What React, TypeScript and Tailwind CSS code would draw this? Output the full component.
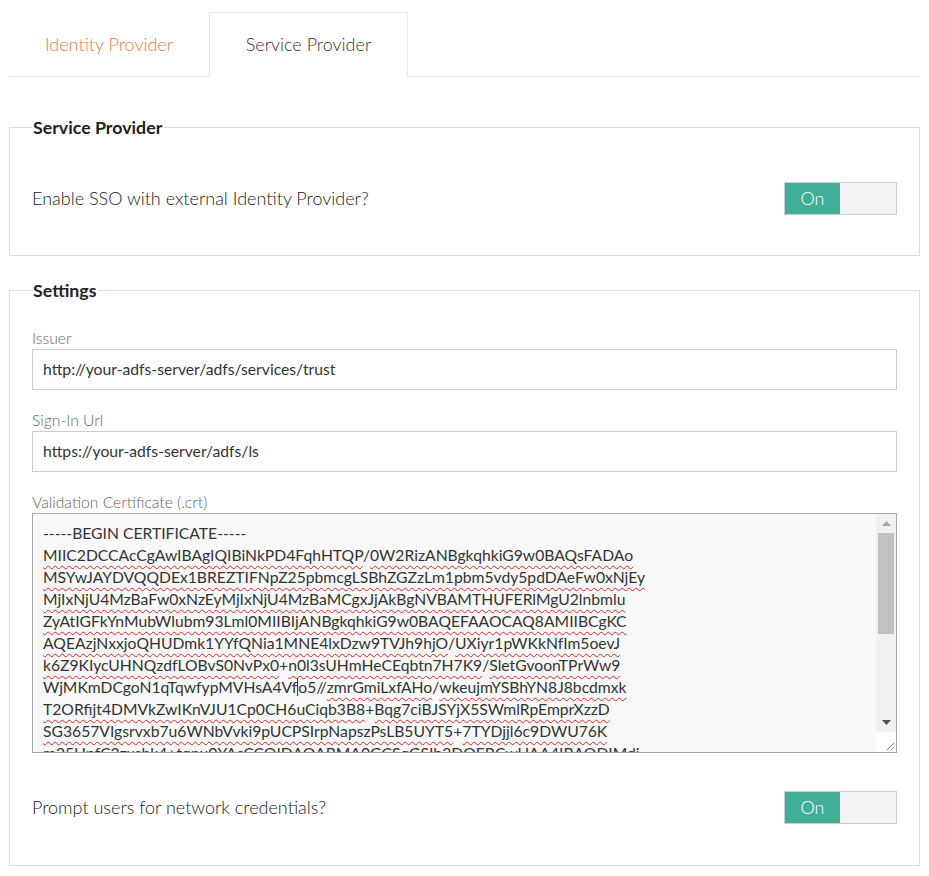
import React from 'react';

const certLines = [
    '-----BEGIN CERTIFICATE-----',
    'MIIC2DCCAcCgAwIBAgIQIBiNkPD4FqhHTQP/0W2RizANBgkqhkiG9w0BAQsFADAo',
    'MSYwJAYDVQQDEx1BREZTIFNpZ25pbmcgLSBhZGZzLm1pbm5vdy5pdDAeFw0xNjEy',
    'MjIxNjU4MzBaFw0xNzEyMjIxNjU4MzBaMCgxJjAkBgNVBAMTHUFERlMgU2lnbmlu',
    'ZyAtIGFkYnMubWlubm93Lml0MIIBIjANBgkqhkiG9w0BAQEFAAOCAQ8AMIIBCgKC',
    'AQEAzjNxxjoQHUDmk1YYfQNia1MNE4lxDzw9TVJh9hjO/UXiyr1pWKkNfIm5oevJ',
    'k6Z9KIycUHNQzdfLOBvS0NvPx0+n0l3sUHmHeCEqbtn7H7K9/SletGvoonTPrWw9',
    'WjMKmDCgoN1qTqwfypMVHsA4Vfo5//zmrGmiLxfAHo/wkeujmYSBhYN8J8bcdmxk',
    'T2ORfijt4DMVkZwIKnVJU1Cp0CH6uCiqb3B8+Bqg7ciBJSYjX5SWmlRpEmprXzzD',
    'SG3657VIgsrvxb7u6WNbVvki9pUCPSIrpNapszPsLB5UYT5+7TYDjjl6c9DWU76K',
    'm25HpfC2zxsbk4+tqnu0YAsCCQIDAQABMA0GCSqGSIb3DQEBCwUAA4IBAQDIMdi',
];

// words the spell checker flags: split on / and +, skip the header and the word being edited
function CertLine({ text, index }: { text: string; index: number }) {
    if (index === 0) return <div>{text}</div>;
    const parts = text.split(/([/+]+)/);
    return (
        <div className="whitespace-nowrap">
            {parts.map((p, i) => {
                if (p === '') return null;
                if (/^[/+]+$/.test(p)) return <span key={i}>{p}</span>;
                if (index === 7 && i === 0) {
                    return (
                        <span key={i}>
                            WjMKmDCgoN1qTqwfypMVHsA4Vf
                            <span className="inline-block w-px h-[18px] bg-[#333] align-[-3px]" />
                            o5
                        </span>
                    );
                }
                return (
                    <span key={i} className="underline decoration-wavy decoration-[#e02020] decoration-1 underline-offset-[4px]">
                        {p}
                    </span>
                );
            })}
        </div>
    );
}

function Toggle() {
    return (
        <div className="flex w-[113px] h-[33px] border border-[#cccccc] shrink-0">
            <div className="w-[55px] bg-[#42ae98] text-white text-[18px] font-light flex items-center justify-center">On</div>
            <div className="flex-1 bg-[#f3f3f3]" />
        </div>
    );
}

function Field({ label, value }: { label: string; value: string }) {
    return (
        <div className="mb-[20px]">
            <div className="text-[15.7px] leading-[20px] font-light text-[#666] mb-px">{label}</div>
            <div className="h-[41px] border border-[#cccccc] bg-white flex items-center px-[10px] text-[15.7px] text-[#333]">
                {value}
            </div>
        </div>
    );
}

export default function App() {
    return (
        <div className="min-h-[876px] bg-white px-[9px] pt-[12px] text-[#444]" style={{ fontFamily: 'Lato, "Open Sans", sans-serif' }}>
            {/* tabs */}
            <div className="flex border-b border-[#e8e8e8] h-[65px]">
                <div className="w-[200px] flex items-center justify-center text-[18px] font-light text-[#f07a48] pt-px">
                    Identity Provider
                </div>
                <div className="w-[199px] flex items-center justify-center text-[18px] font-light text-[#333] border border-[#e8e8e8] border-b-0 bg-white -mb-px pb-[1px]">
                    Service Provider
                </div>
            </div>

            <fieldset className="mt-[40px] border border-[#dddddd] px-[22px] pt-[45px] pb-[40px]">
                <legend className="px-px text-[17.8px] leading-[20px] font-bold text-[#222]">Service Provider</legend>
                <div className="flex items-center justify-between">
                    <span className="text-[18px] font-light text-[#222]">Enable SSO with external Identity Provider?</span>
                    <Toggle />
                </div>
            </fieldset>

            <fieldset className="mt-[24px] border border-[#dddddd] px-[22px] pt-[28px] pb-[41px]">
                <legend className="px-px text-[17.8px] leading-[20px] font-bold text-[#222]">Settings</legend>
                <Field label="Issuer" value="http://your-adfs-server/adfs/services/trust" />
                <Field label="Sign-In Url" value="https://your-adfs-server/adfs/ls" />

                <div>
                    <div className="text-[15.7px] leading-[20px] font-light text-[#666] mb-px">Validation Certificate (.crt)</div>
                    <div className="h-[240px] border border-[#a9a9a9] bg-[#f9f9f9] flex">
                        <div className="flex-1 overflow-hidden pl-[10px] pt-[8px] text-[15.7px] leading-[22px] text-[#333]">
                            {certLines.map((l, i) => (
                                <CertLine key={i} text={l} index={i} />
                            ))}
                        </div>
                        {/* scrollbar + resize grip */}
                        <div className="w-[20px] flex flex-col bg-white">
                            <div className="flex-1 flex flex-col bg-[#f1f1f1]">
                                <div className="h-[19px] flex items-center justify-center">
                                    <svg width="9" height="5" viewBox="0 0 9 5"><path d="M4.5 0L9 5H0z" fill="#a3a3a3" /></svg>
                                </div>
                                <div className="mx-[2px] h-[101px] bg-[#c1c1c1]" />
                                <div className="flex-1" />
                                <div className="h-[19px] flex items-center justify-center">
                                    <svg width="9" height="5" viewBox="0 0 9 5"><path d="M0 0H9L4.5 5z" fill="#505050" /></svg>
                                </div>
                            </div>
                            <div className="h-[20px] flex items-end justify-end pr-[2px] pb-[2px]">
                                <svg width="8" height="8" viewBox="0 0 8 8">
                                    <path d="M1 8L8 1M5 8L8 5" stroke="#8a8a8a" strokeWidth="1" />
                                </svg>
                            </div>
                        </div>
                    </div>
                </div>

                <div className="flex items-center justify-between mt-[38px]">
                    <span className="text-[18px] font-light text-[#222]">Prompt users for network credentials?</span>
                    <Toggle />
                </div>
            </fieldset>
        </div>
    );
}
